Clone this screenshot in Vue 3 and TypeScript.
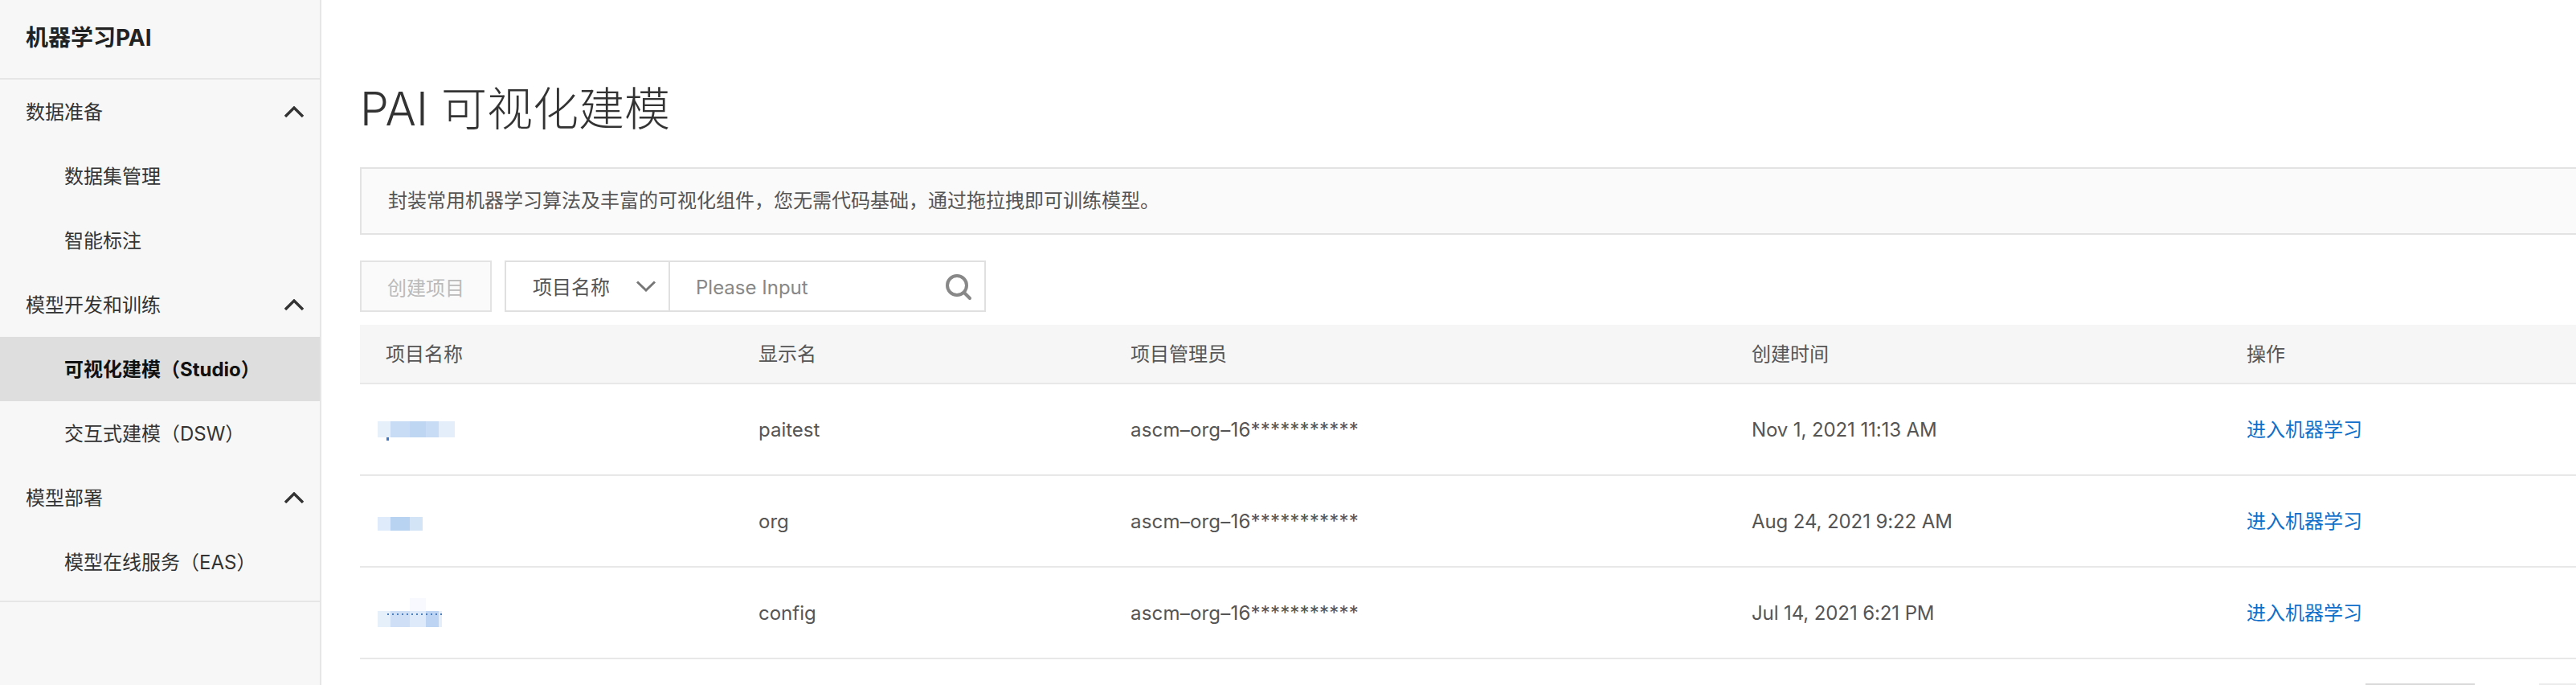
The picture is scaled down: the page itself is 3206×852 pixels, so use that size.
<script setup lang="ts">
interface NavItem {
  label: string
  group?: boolean
  active?: boolean
}

interface Patch {
  width: number
  color: string
}

interface Row {
  patches: Patch[]
  kind: string
  display: string
  created: string
}

const navItems: NavItem[] = [
  { label: '数据准备', group: true },
  { label: '数据集管理' },
  { label: '智能标注' },
  { label: '模型开发和训练', group: true },
  { label: '可视化建模（Studio）', active: true },
  { label: '交互式建模（DSW）' },
  { label: '模型部署', group: true },
  { label: '模型在线服务（EAS）' }
]

const columns = ['项目名称', '显示名', '项目管理员', '创建时间', '操作']

// the project names are pixelated in the source, so they are colour patches here
const rows: Row[] = [
  {
    kind: 'first',
    display: 'paitest',
    created: 'Nov 1, 2021 11:13 AM',
    patches: [
      { width: 16, color: '#e6f0fb' },
      { width: 24, color: '#c9dcf5' },
      { width: 20, color: '#bfd6f3' },
      { width: 16, color: '#c9dcf5' },
      { width: 20, color: '#e3eefa' }
    ]
  },
  {
    kind: 'second',
    display: 'org',
    created: 'Aug 24, 2021 9:22 AM',
    patches: [
      { width: 16, color: '#dfeafa' },
      { width: 24, color: '#b8d3f1' },
      { width: 16, color: '#d4e4f7' }
    ]
  },
  {
    kind: 'third',
    display: 'config',
    created: 'Jul 14, 2021 6:21 PM',
    patches: [
      { width: 16, color: '#e6f0fb' },
      { width: 24, color: '#cfe0f6' },
      { width: 20, color: '#deeafa' },
      { width: 16, color: '#bdd5f2' },
      { width: 4, color: '#e3eefa' }
    ]
  }
]
</script>

<template>
  <div class="page">
    <aside class="sidebar">
      <div class="sidebar-title">机器学习PAI</div>
      <nav class="nav">
        <div
          v-for="item in navItems"
          :key="item.label"
          class="nav-item"
          :class="{ 'nav-item--group': item.group, 'nav-item--active': item.active }"
        >
          <span class="nav-label">{{ item.label }}</span>
          <svg v-if="item.group" class="nav-arrow" width="24" height="14" viewBox="0 0 24 14">
            <path d="M1 13 12 2l11 11" fill="none" stroke="#333" stroke-width="3.4" />
          </svg>
        </div>
      </nav>
    </aside>

    <main class="main">
      <h1 class="title">PAI 可视化建模</h1>
      <div class="notice">封装常用机器学习算法及丰富的可视化组件，您无需代码基础，通过拖拉拽即可训练模型。</div>

      <div class="toolbar">
        <button class="create-btn" disabled>创建项目</button>
        <div class="search">
          <div class="search-select">
            <span class="select-label">项目名称</span>
            <svg width="24" height="14" viewBox="0 0 24 14">
              <path d="M1 1.5 12 12 23 1.5" fill="none" stroke="#777" stroke-width="3" />
            </svg>
          </div>
          <input class="search-input" placeholder="Please Input" />
          <svg class="search-icon" width="34" height="34" viewBox="0 0 34 34">
            <circle cx="15" cy="15" r="12" fill="none" stroke="#888" stroke-width="4" />
            <path d="m24 24 7 7" fill="none" stroke="#888" stroke-width="4" stroke-linecap="round" />
          </svg>
        </div>
      </div>

      <div class="table">
        <div class="table-row table-row--head">
          <div v-for="col in columns" :key="col" class="cell cell--cjk">{{ col }}</div>
        </div>
        <div v-for="row in rows" :key="row.display" class="table-row">
          <div class="cell cell--name">
            <div class="mosaic" :class="'mosaic--' + row.kind">
              <i
                v-for="(patch, i) in row.patches"
                :key="i"
                :style="{ width: patch.width + 'px', background: patch.color }"
              ></i>
            </div>
          </div>
          <div class="cell">{{ row.display }}</div>
          <div class="cell cell--admin">ascm–org–16***********</div>
          <div class="cell cell--date">{{ row.created }}</div>
          <div class="cell cell--cjk"><a class="link">进入机器学习</a></div>
        </div>
      </div>

      <div class="pager">
        <div class="pager-btn"></div>
        <div class="pager-btn pager-btn--light"></div>
      </div>
    </main>
  </div>
</template>

<style scoped>
.page {
  display: flex;
  width: 3206px;
  height: 852px;
  overflow: hidden;
  background: #fff;
  color: #555;
  font-family: Inter, "Noto Sans CJK SC", sans-serif;
  font-size: 24px;
}

.sidebar {
  flex: none;
  box-sizing: border-box;
  width: 400px;
  background: #f7f7f7;
  border-right: 2px solid #e6e6e6;
}

.sidebar-title {
  box-sizing: border-box;
  height: 99px;
  padding-left: 32px;
  border-bottom: 2px solid #e6e6e6;
  color: #222;
  font-size: 28px;
  font-weight: 700;
  line-height: 94px;
}

.nav {
  padding-bottom: 8px;
  border-bottom: 2px solid #e6e6e6;
}

.nav-item {
  display: flex;
  align-items: center;
  justify-content: space-between;
  height: 80px;
  padding: 0 20px 0 80px;
  color: #333;
}

.nav-label {
  padding-bottom: 3px;
}

.nav-item--group {
  padding-left: 32px;
}

.nav-item--active {
  background: #dedede;
  color: #111;
  font-weight: 700;
}

.main {
  flex: none;
  box-sizing: border-box;
  width: 2806px;
  padding: 100px 0 0 48px;
}

.title {
  margin: 0 0 36px;
  color: #333;
  font-size: 57px;
  font-weight: 300;
  line-height: 72px;
}

.notice {
  box-sizing: border-box;
  height: 84px;
  padding: 0 33px;
  border: 2px solid #e3e3e3;
  border-right: 0;
  background: #fafafa;
  line-height: 80px;
}

.toolbar {
  display: flex;
  gap: 16px;
  height: 64px;
  margin-top: 32px;
}

.create-btn {
  box-sizing: border-box;
  width: 164px;
  border: 2px solid #e3e3e3;
  background: #fafafa;
  color: #bbb;
  font: inherit;
}

.search {
  position: relative;
  display: flex;
  box-sizing: border-box;
  width: 599px;
  border: 2px solid #e0e0e0;
}

.search-select {
  display: flex;
  flex: none;
  align-items: center;
  justify-content: space-between;
  box-sizing: border-box;
  width: 204px;
  padding: 0 16px 0 33px;
  border-right: 2px solid #e0e0e0;
}

.select-label {
  padding-bottom: 2px;
}

.search-input {
  flex: 1;
  min-width: 0;
  padding: 2px 0 0 32px;
  border: 0;
  outline: none;
  color: #555;
  font: inherit;
}

.search-input::placeholder {
  color: #888;
  opacity: 1;
}

.search-icon {
  position: absolute;
  top: 14px;
  right: 15px;
}

.table {
  margin-top: 16px;
}

.table-row {
  display: grid;
  grid-template-columns: 464px 463px 773px 616px 1fr;
  align-items: center;
  box-sizing: border-box;
  height: 114px;
  border-bottom: 2px solid #e8e8e8;
}

.table-row--head {
  height: 74px;
  background: #f6f6f6;
}

.cell {
  padding-left: 32px;
  white-space: nowrap;
}

.cell--cjk {
  padding-bottom: 3px;
}

.cell--name {
  padding-left: 22px;
}

.cell--admin {
  letter-spacing: 0.2px;
}

.cell--date {
  letter-spacing: -0.1px;
}

.mosaic {
  position: relative;
  display: flex;
}

.mosaic i {
  display: block;
}

.mosaic--first {
  height: 20px;
}

.mosaic--first::after {
  content: "";
  position: absolute;
  top: 20px;
  left: 11px;
  width: 3px;
  height: 4px;
  background: #3a78c8;
}

.mosaic--second {
  height: 17px;
  margin-top: 7px;
}

.mosaic--third {
  height: 20px;
  margin-top: 16px;
}

.mosaic--third::before {
  content: "";
  position: absolute;
  top: -16px;
  left: 40px;
  width: 20px;
  height: 16px;
  background: #f7f9fe;
}

.mosaic--third::after {
  content: "";
  position: absolute;
  top: 3px;
  left: 12px;
  width: 68px;
  height: 2px;
  background: repeating-linear-gradient(90deg, #4a7fc0 0 2px, transparent 2px 6px);
}

.link {
  color: #0f6fca;
}

.pager {
  display: flex;
  gap: 80px;
  margin: 30px 0 0 2496px;
}

.pager-btn {
  flex: none;
  box-sizing: border-box;
  width: 136px;
  height: 64px;
  border: 2px solid #d9d9d9;
}

.pager-btn--light {
  border-color: #ebebeb;
}
</style>
